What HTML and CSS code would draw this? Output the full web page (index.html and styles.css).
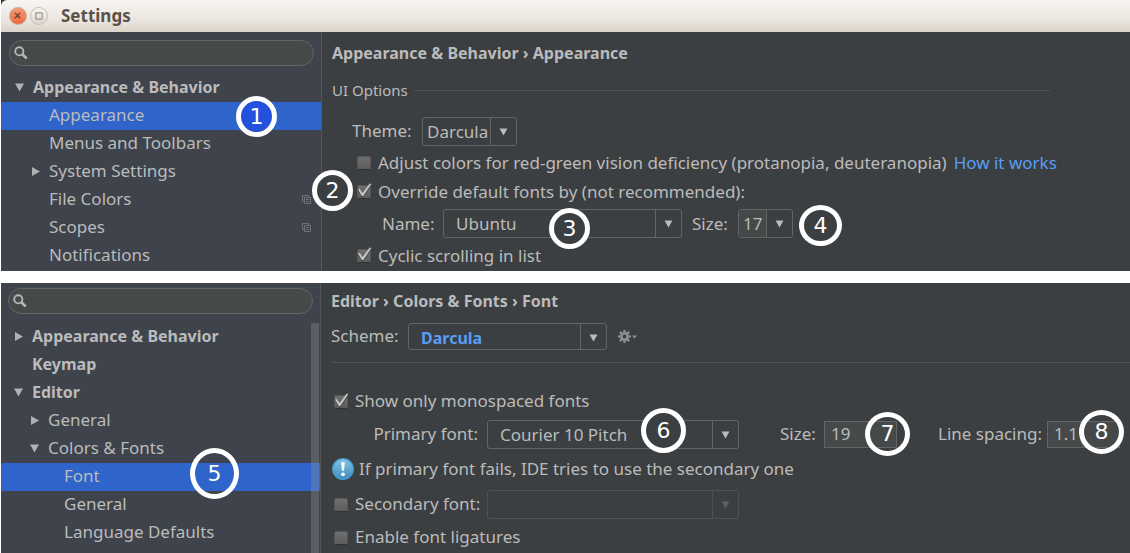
FILE: index.html
```html
<!DOCTYPE html>
<html lang="en">
<head>
<meta charset="utf-8">
<title>Settings</title>
<link rel="stylesheet" href="styles.css">
</head>
<body>
<svg class="defs" aria-hidden="true">
  <symbol id="search" viewBox="0 0 14 14"><circle cx="5.3" cy="5.3" r="4.1" fill="none" stroke="#b4b6b7" stroke-width="1.9"/><path d="M8.3 8.3l4.4 4.2" stroke="#b4b6b7" stroke-width="2.6"/></symbol>
  <symbol id="down" viewBox="0 0 9 9"><path d="M0 .5h9L4.500 8.500z" fill="currentColor"/></symbol>
  <symbol id="right" viewBox="0 0 9 9"><path d="M1 0v9l8-4.500z" fill="currentColor"/></symbol>
  <symbol id="copy" viewBox="0 0 9 9"><path d="M2.500 6.500h-2v-6h6v2M2.500 2.500h6v6h-6zM4 4.500h3M4 6.500h3" fill="none" stroke="#6f7377"/></symbol>
</svg>

<section class="window upper">
  <header class="titlebar">
    <button class="winbtn close" aria-label="Close"><svg viewBox="0 0 18 18"><path d="M5.500 5.500l6 6M11.500 5.500l-6 6" stroke="#6b3a26" stroke-width="1.5"/></svg></button>
    <button class="winbtn" aria-label="Maximize"><svg viewBox="0 0 18 18"><path d="M5.500 5.500h7v7h-7z" fill="none" stroke="#7d776e"/></svg></button>
    <h1 class="title">Settings</h1>
  </header>
  <div class="panes">
    <nav class="sidebar">
      <label class="search"><svg><use href="#search"/></svg><input type="text" aria-label="Search settings"></label>
      <ul class="tree">
        <li class="row group"><svg class="tw"><use href="#down"/></svg>Appearance &amp; Behavior</li>
        <li class="row child selected">Appearance</li>
        <li class="row child">Menus and Toolbars</li>
        <li class="row child"><svg class="tw"><use href="#right"/></svg>System Settings</li>
        <li class="row child">File Colors<svg class="copy"><use href="#copy"/></svg></li>
        <li class="row child">Scopes<svg class="copy"><use href="#copy"/></svg></li>
        <li class="row child">Notifications</li>
      </ul>
    </nav>
    <main class="content appearance">
      <h2 class="crumbs">Appearance &amp; Behavior › Appearance</h2>
      <h3 class="legend"><span>UI Options</span></h3>
      <div class="line raised theme">
        <label for="theme">Theme:</label>
        <span class="combo theme-box"><select id="theme"><option>Darcula</option></select><svg><use href="#down"/></svg></span>
      </div>
      <div class="line check"><input type="checkbox" id="adjust"><label for="adjust">Adjust colors for red-green vision deficiency (protanopia, deuteranopia)</label><a class="link" href="#">How it works</a></div>
      <div class="line check"><input type="checkbox" id="override" checked><label for="override">Override default fonts by (not recommended):</label></div>
      <div class="line fontline">
        <label class="name-label" for="name">Name:</label>
        <span class="combo name-box"><select id="name"><option>Ubuntu</option></select><svg><use href="#down"/></svg></span>
        <label class="size-label" for="size">Size:</label>
        <span class="combo size-box"><select id="size"><option>17</option></select><svg><use href="#down"/></svg></span>
      </div>
      <div class="line check"><input type="checkbox" id="cyclic" checked><label for="cyclic">Cyclic scrolling in list</label></div>
    </main>
  </div>
  <span class="pin pin1">1</span>
  <span class="pin pin2">2</span>
  <span class="pin pin3">3</span>
  <span class="pin pin4">4</span>
</section>

<section class="window lower">
  <div class="panes">
    <nav class="sidebar">
      <label class="search"><svg><use href="#search"/></svg><input type="text" aria-label="Search settings"></label>
      <ul class="tree scrolled">
        <li class="row group"><svg class="tw"><use href="#right"/></svg>Appearance &amp; Behavior</li>
        <li class="row group">Keymap</li>
        <li class="row group"><svg class="tw"><use href="#down"/></svg>Editor</li>
        <li class="row child"><svg class="tw"><use href="#right"/></svg>General</li>
        <li class="row child"><svg class="tw"><use href="#down"/></svg>Colors &amp; Fonts</li>
        <li class="row leaf selected">Font</li>
        <li class="row leaf">General</li>
        <li class="row leaf">Language Defaults</li>
        <li class="row leaf">Console Colors</li>
      </ul>
    </nav>
    <main class="content editor">
      <h2 class="crumbs">Editor › Colors &amp; Fonts › Font</h2>
      <div class="line raised scheme">
        <label for="scheme">Scheme:</label>
        <span class="combo scheme-box"><select id="scheme"><option>Darcula</option></select><svg><use href="#down"/></svg></span>
        <button class="gear" aria-label="Scheme actions"><svg viewBox="0 0 20 14"><g stroke="#8d9092" fill="none"><circle cx="6.500" cy="6.500" r="3.200" stroke-width="2.600"/><path d="M6.500 0v3M6.500 10v3M0 6.500h3M10 6.500h3M1.900 1.900l2.100 2.100M9 9l2.100 2.100M11.100 1.900L9 4M4 9l-2.100 2.100" stroke-width="2.200"/></g><path d="M14 5.500h5l-2.500 3z" fill="#8d9092"/></svg></button>
      </div>
      <hr class="rule">
      <div class="line raised check"><input type="checkbox" id="mono" checked><label for="mono">Show only monospaced fonts</label></div>
      <div class="line raised primary">
        <label class="primary-label" for="primary">Primary font:</label>
        <span class="combo wide-box"><select id="primary"><option>Courier 10 Pitch</option></select><svg><use href="#down"/></svg></span>
        <label class="psize-label" for="psize">Size:</label>
        <input class="field" type="text" id="psize" value="19">
        <label class="spacing-label" for="spacing">Line spacing:</label>
        <input class="field" type="text" id="spacing" value="1.1">
      </div>
      <p class="line info">
        <svg viewBox="0 0 22 22"><defs><linearGradient id="blue" x2="0" y2="1"><stop stop-color="#86c5e4"/><stop offset="1" stop-color="#3a8dbf"/></linearGradient></defs><circle cx="11" cy="11" r="10.300" fill="url(#blue)" stroke="#4b9dcb" stroke-width="1.300"/><path d="M9.200 4.200h3.600l-.7 8.600H9.900z" fill="#fff"/><circle cx="11" cy="16.300" r="1.900" fill="#fff"/></svg>
        If primary font fails, IDE tries to use the secondary one
      </p>
      <div class="line raised check secondary">
        <input type="checkbox" id="second"><label for="second">Secondary font:</label>
        <span class="combo wide-box off"><select aria-label="Secondary font" disabled><option></option></select><svg><use href="#down"/></svg></span>
      </div>
      <div class="line raised check"><input type="checkbox" id="liga"><label for="liga">Enable font ligatures</label></div>
    </main>
  </div>
  <span class="pin pin5">5</span>
  <span class="pin pin6">6</span>
  <span class="pin pin7">7</span>
  <span class="pin pin8">8</span>
</section>
</body>
</html>
```

FILE: styles.css
```css
* { box-sizing: border-box; }
body {
  margin: 0;
  padding-left: 1px;
  height: 100vh;
  display: flex;
  flex-direction: column;
  gap: 12px;
  overflow: hidden;
  background: #fff;
  color: #bbb;
  font: 17px/28px "Noto Sans", "Open Sans", sans-serif;
}
h1, h2, h3, p, ul { margin: 0; padding: 0; }
ul { list-style: none; }
label, a, p, li, h2, h3 { white-space: nowrap; }
input, select, button { font: inherit; color: inherit; margin: 0; }
.defs { position: absolute; width: 0; height: 0; }

.window { position: relative; flex: none; }
.upper { background: #2b2d33; }
.window.lower { flex: 1; min-height: 0; overflow: hidden; }
.titlebar {
  height: 32px;
  display: flex;
  align-items: center;
  gap: 3px;
  padding-left: 8px;
  background: linear-gradient(#f7f6f3, #e9e4dd 65%, #dcd3ca);
  border-radius: 6px 0 0 0;
}
.winbtn {
  width: 18px;
  height: 18px;
  padding: 0;
  display: grid;
  border: 1px solid #c6c0b7;
  border-radius: 50%;
  background: linear-gradient(#f8f6f3, #dcd6ce);
}
.close { background: linear-gradient(#f59a78, #ed6a3c); border-color: #d3aa98; }
.title { margin-left: 10px; font-size: 17px; font-weight: 700; color: #5a5149; }

.panes { display: grid; grid-template-columns: 321px 1fr; }
.lower .panes { grid-template-columns: 320px 1fr; height: 100%; }
.sidebar {
  display: flex;
  flex-direction: column;
  gap: 8px;
  min-height: 0;
  padding: 8px 0 1px;
  background: #3e434c;
  border-right: 1px solid #555657;
}
.lower .sidebar { padding: 5px 0 0; }
.search {
  height: 26px;
  flex: none;
  margin: 0 7px 0 8px;
  padding-left: 4px;
  display: flex;
  align-items: center;
  border: 1px solid #646464;
  border-radius: 13px;
  background: #45494a;
}
.lower .search { margin-left: 7px; }
.search svg { width: 14px; height: 14px; flex: none; }
.search input { flex: 1; min-width: 0; height: 20px; border: 0; background: none; outline: 0; }
.tree { position: relative; min-height: 0; }
.row { height: 28px; display: flex; align-items: center; padding-bottom: 2px; }
.group { padding-left: 32px; font-size: 16px; font-weight: 700; }
.child { padding-left: 48px; }
.leaf { padding-left: 64px; }
.lower .group { padding-left: 31px; }
.lower .child { padding-left: 47px; }
.lower .leaf { padding-left: 63px; }
.selected { background: #2f65ca; }
.tw { width: 9px; height: 9px; margin-left: -18px; margin-right: 9px; color: #afb1b3; }
.copy { width: 9px; height: 9px; margin-left: auto; margin-right: 10px; }
.scrolled { padding-top: 1px; }
.scrolled::after {
  content: "";
  position: absolute;
  top: 1px;
  right: 1px;
  bottom: 0;
  width: 8px;
  background: rgba(160, 160, 160, 0.3);
}

.content { min-width: 0; padding: 7px 0 0 10px; background: #3c3f41; }
.crumbs { font-size: 16px; line-height: 28px; font-weight: 700; }
.legend {
  margin: 9px 80px 0 0;
  display: flex;
  align-items: center;
  gap: 6px;
  font-size: 15px;
  font-weight: 400;
}
.legend::after { content: ""; flex: 1; height: 1px; background: #515151; }
.line { display: flex; align-items: center; height: 29px; }
.raised label, .raised select { padding-bottom: 2px; }
.check { gap: 7px; }
.link { color: #589df6; text-decoration: none; }

input[type="checkbox"] {
  appearance: none;
  position: relative;
  width: 14px;
  height: 14px;
  flex: none;
  border: 1px solid #565656;
  border-bottom-color: #2f3132;
  border-radius: 2px;
  background: linear-gradient(#6f6f6f, #5c5c5c);
}
input[type="checkbox"]:checked::before,
input[type="checkbox"]:checked::after {
  content: "";
  position: absolute;
  inset: -3px;
  background: #c4c4c4;
  clip-path: polygon(17% 40%, 26% 35%, 42% 58%, 82% 6%, 91% 9%, 46% 77%, 38% 77%);
}
input[type="checkbox"]:checked::before { inset: -2px -3px -4px; background: #2d2f30; }

.combo {
  position: relative;
  display: flex;
  height: 29px;
  border: 1px solid #646464;
  border-radius: 3px;
  flex: none;
}
.combo select {
  appearance: none;
  flex: 1;
  min-width: 0;
  padding-top: 0;
  padding-left: 12px;
  padding-right: 0;
  border: 0;
  border-right: 1px solid #646464;
  margin-right: 25px;
  background: none;
  outline: 0;
  opacity: 1;
}
.combo svg { position: absolute; right: 8px; top: 10px; width: 9px; height: 8px; pointer-events: none; }
.theme-box { width: 95px; }
.combo.theme-box select { padding-left: 4px; }
.name-box { width: 239px; }
.size-box { width: 55px; }
.combo.size-box select { padding-left: 4px; background: #45494a; }
.wide-box { width: 252px; }
.scheme-box { width: 199px; height: 27px; }
.combo.scheme-box select { color: #589df6; font-size: 16px; font-weight: 700; }
.off { border-color: #515151; color: #5c5f61; }
.combo.off select { border-color: #515151; }

.appearance .check { padding-left: 25px; }
.theme { padding-left: 20px; margin: 13px 0 2px; }
.theme label { width: 70px; }
.fontline { padding-left: 50px; margin: 3px 0; }
.name-label { width: 61px; }
.size-label { width: 56px; padding-left: 10px; }

.editor { padding: 4px 0 0 10px; }
.scheme { margin-top: 8px; height: 27px; }
.scheme label { width: 77px; }
.gear { width: 20px; height: 14px; margin-left: 11px; padding: 0; border: 0; background: none; display: grid; }
.rule { margin: 12px 0 24px; border: 0; height: 1px; background: #515151; }
.editor .check { padding-left: 3px; }
.primary { margin: 4px 0 5px; }
.primary-label { width: 156px; padding-right: 9px; text-align: right; }
.psize-label { width: 85px; padding-left: 41px; }
.spacing-label { width: 150px; padding-left: 41px; }
.field { width: 73px; height: 27px; padding: 0 6px 2px; border: 1px solid #646464; background: #45494a; outline: 0; }
.info { gap: 5px; margin-left: 1px; }
.info svg { width: 22px; height: 22px; flex: none; }
.secondary { margin: 7px 0 4px; }
.secondary label { width: 125px; }

.pin {
  position: absolute;
  width: 41px;
  height: 41px;
  display: grid;
  place-items: center;
  border: 5px solid #fff;
  border-radius: 50%;
  color: #fff;
  font: 22px/22px "DejaVu Sans", sans-serif;
}
.pin1 { left: 235px; top: 96px; background: radial-gradient(circle at 50% 35%, #2350dc 70%, #2b2f86); }
.pin2 { left: 311px; top: 170px; background: #3c3f41; }
.pin3 { left: 548px; top: 208px; background: #3c3f41; }
.pin4 { left: 798px; top: 205px; width: 43px; }
.pin5 { left: 189px; top: 165px; width: 49px; height: 51px; }
.pin6 { left: 640px; top: 125px; width: 45px; height: 45px; background: #3c3f41; }
.pin7 { left: 864px; top: 129px; width: 45px; height: 44px; }
.pin8 { left: 1078px; top: 127px; width: 45px; height: 44px; }
```
